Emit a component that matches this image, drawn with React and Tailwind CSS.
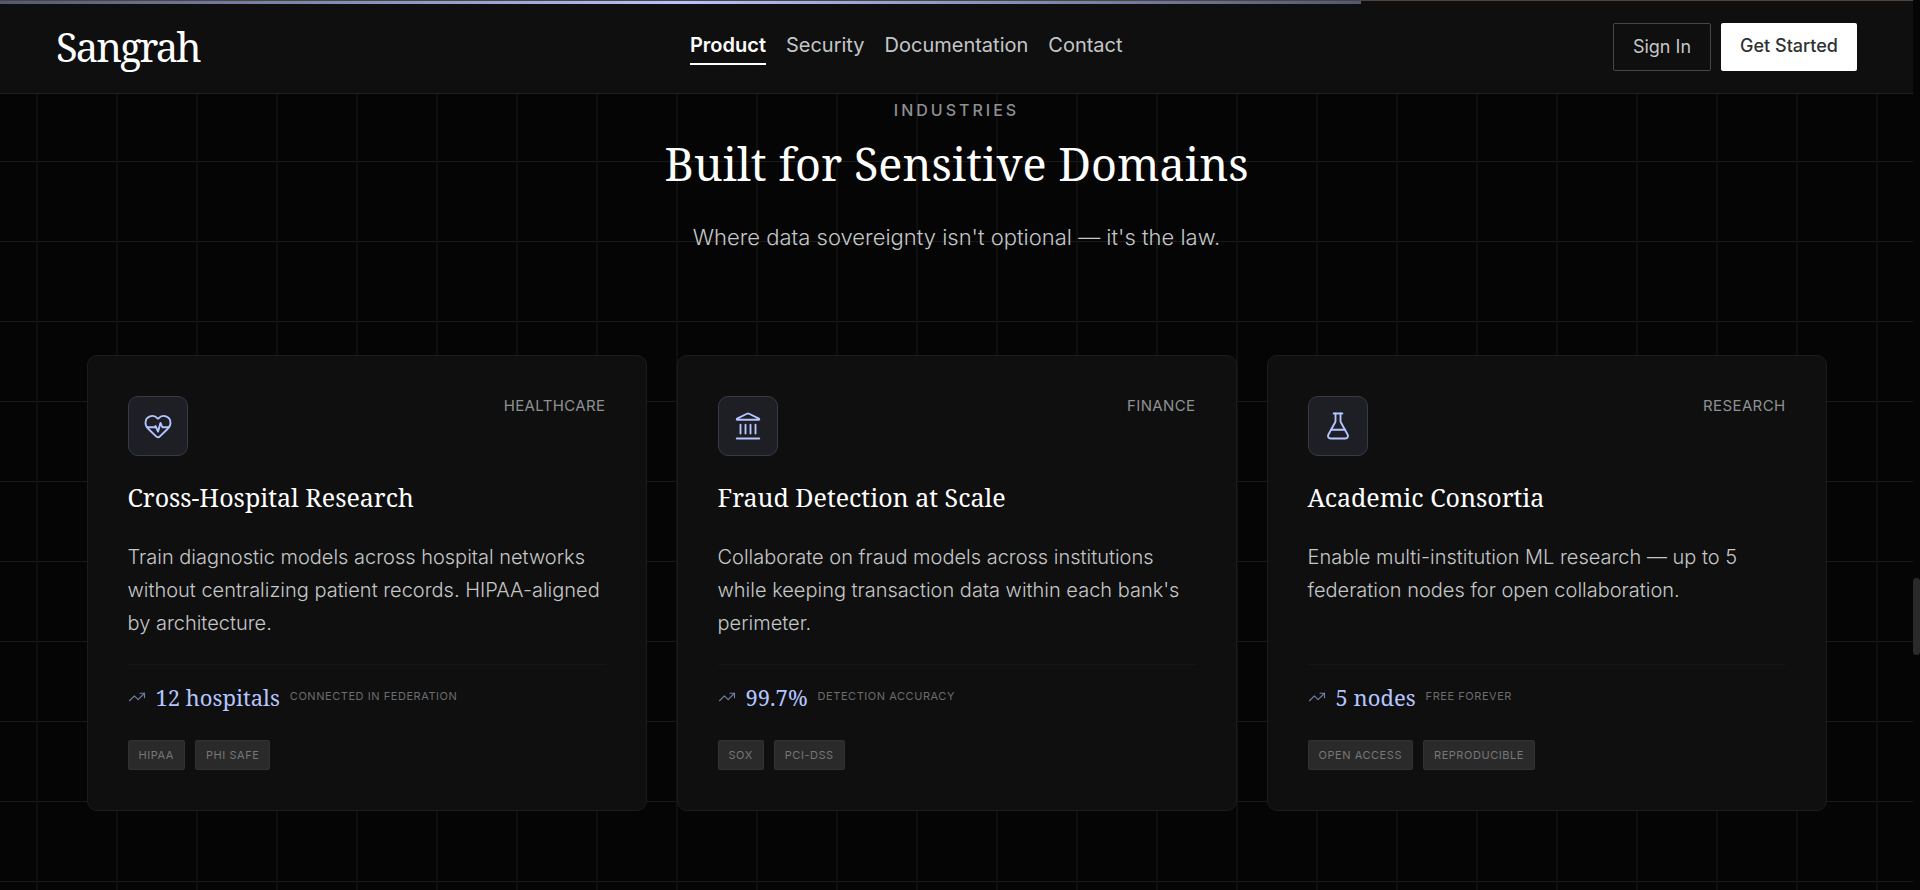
import { FlaskConical, HeartPulse, Landmark, TrendingUp } from "lucide-react";

const navLinks = [
  { label: "Product", active: true },
  { label: "Security" },
  { label: "Documentation" },
  { label: "Contact" },
];

const industries = [
  {
    icon: HeartPulse,
    sector: "Healthcare",
    title: "Cross-Hospital Research",
    text: "Train diagnostic models across hospital networks without centralizing patient records. HIPAA-aligned by architecture.",
    stat: "12 hospitals",
    statLabel: "Connected in federation",
    tags: ["HIPAA", "PHI Safe"],
  },
  {
    icon: Landmark,
    sector: "Finance",
    title: "Fraud Detection at Scale",
    text: "Collaborate on fraud models across institutions while keeping transaction data within each bank's perimeter.",
    stat: "99.7%",
    statLabel: "Detection accuracy",
    tags: ["SOX", "PCI-DSS"],
  },
  {
    icon: FlaskConical,
    sector: "Research",
    title: "Academic Consortia",
    text: "Enable multi-institution ML research — up to 5 federation nodes for open collaboration.",
    stat: "5 nodes",
    statLabel: "Free forever",
    tags: ["Open Access", "Reproducible"],
  },
];

const Navbar = () => {
  return (
    <header className="relative h-[94px] border-b border-[#1f1f1f] bg-[#0f0f0f]">
      <div className="absolute inset-x-0 top-0 h-px bg-[#50443b]" />
      {/* scroll progress */}
      <div className="absolute top-px left-0 h-[3px] w-[71.15%] bg-linear-to-r from-[#515a72] via-[#b4c5ff] to-[#515a72]" />
      <div className="flex h-full items-center justify-between px-14">
        <a
          href="#"
          className="font-['Noto_Serif',serif] text-[40px] leading-none tracking-tighter text-white"
        >
          Sangrah
        </a>
        <nav className="flex gap-5 pt-0.5 text-xl leading-7">
          {navLinks.map((link) => (
            <a
              key={link.label}
              href="#"
              className={
                link.active
                  ? "border-b-2 border-white pb-1 font-semibold text-white"
                  : "border-b-2 border-transparent pb-1 text-[#c4c7c8]"
              }
            >
              {link.label}
            </a>
          ))}
        </nav>
        <div className="flex gap-2.5">
          <button className="h-12 rounded-xs border border-[#444748] px-[19px] text-lg text-[#c4c7c8]">
            Sign In
          </button>
          <button className="h-12 rounded-xs bg-white px-[19px] pb-0.5 text-lg font-medium text-[#2f3131]">
            Get Started
          </button>
        </div>
      </div>
    </header>
  );
};

const IndustryCard = ({ item }) => {
  const Icon = item.icon;

  return (
    <article className="flex flex-col rounded-[10px] border border-[#1c1c1c] bg-[#0f0f0f] p-10">
      <div className="mb-6 flex items-start justify-between">
        <div className="flex size-[60px] items-center justify-center rounded-[10px] border border-[#373a47] bg-[#1e1f25] text-[#b4c5ff]">
          <Icon size={30} strokeWidth={1.5} />
        </div>
        <span className="text-[15px] leading-5 tracking-wide text-[#8e9192] uppercase">
          {item.sector}
        </span>
      </div>
      <h3 className="mb-[27px] font-['Noto_Serif',serif] text-[25px] leading-[34px] text-white">
        {item.title}
      </h3>
      <p className="mb-6 grow text-xl leading-[33px] font-light text-[#c4c7c8]">
        {item.text}
      </p>
      <div className="mb-[27px] flex items-center gap-2.5 border-t border-[#151515] pt-4">
        <TrendingUp size={18} className="text-[#7380a5]" strokeWidth={1.5} />
        <span className="font-['Noto_Serif',serif] text-[22px] leading-8 text-[#b4c5ff]">
          {item.stat}
        </span>
        <span className="pb-0.5 text-[11px] tracking-wider text-[#6b6d6e] uppercase">
          {item.statLabel}
        </span>
      </div>
      <div className="flex gap-2.5">
        {item.tags.map((tag) => (
          <span
            key={tag}
            className="rounded-xs border border-[#323232] bg-[#2a2a2a] px-2.5 py-1 text-[11px] leading-5 tracking-wider text-[#757778] uppercase"
          >
            {tag}
          </span>
        ))}
      </div>
    </article>
  );
};

const App = () => {
  return (
    <div className="flex min-h-screen bg-[#050505] font-['Inter',sans-serif]">
      <div className="flex min-w-0 grow flex-col">
        <Navbar />
        <main className="grow bg-[linear-gradient(to_right,#0f0f0f_2px,transparent_2px),linear-gradient(to_bottom,#1a1a1a_1px,transparent_1px)] bg-size-[80px_80px] bg-position-[36px_67px] px-10 pt-1.5 pb-16">
          <section className="mx-auto max-w-[1740px]">
            <div className="mb-25 text-center">
              <p className="mb-4 text-base leading-5 font-medium tracking-[3px] text-[#8e9192] uppercase">
                Industries
              </p>
              <h2 className="mb-[27px] font-['Noto_Serif',serif] text-[45px] leading-[56px] text-white">
                Built for Sensitive Domains
              </h2>
              <p className="text-[22px] leading-9 font-light text-[#c4c7c8]">
                Where data sovereignty isn't optional — it's the law.
              </p>
            </div>
            <div className="grid grid-cols-3 gap-[30px]">
              {industries.map((item) => (
                <IndustryCard key={item.title} item={item} />
              ))}
            </div>
          </section>
        </main>
      </div>
      <div className="w-[7px] shrink-0 bg-[#050505] pt-[578px]">
        <div className="h-[77px] rounded-full bg-[#2a2a2a]" />
      </div>
    </div>
  );
};

export default App;
